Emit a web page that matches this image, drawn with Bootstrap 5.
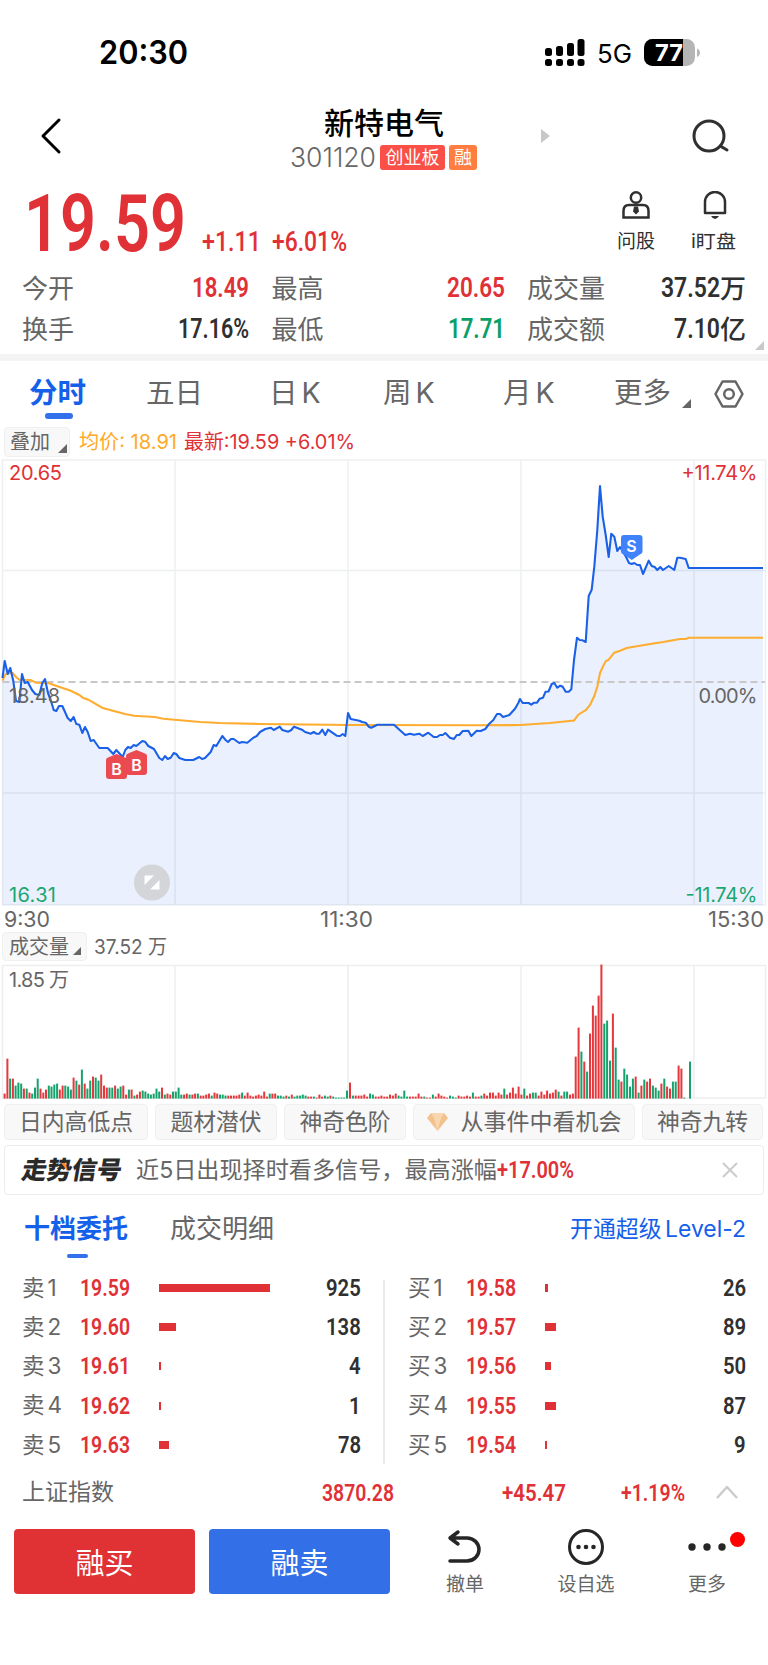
<!DOCTYPE html>
<html lang="zh-CN">
<head>
<meta charset="utf-8">
<meta name="viewport" content="width=device-width, initial-scale=1">
<title>新特电气 301120</title>
<link href="https://cdn.jsdelivr.net/npm/bootstrap@5.3.0/dist/css/bootstrap.min.css" rel="stylesheet">
<style>
:root{--up:#e03136;--down:#0b9f68;--brand:#1560ea;--ink:#303030;--dim:#666}
body{font-family:Inter,"Noto Sans CJK SC",sans-serif;color:var(--dim);line-height:1;background:#fff;width:768px;height:1665px;overflow:hidden}
svg{display:block;flex:none}
.din{font-family:Roboto,"Noto Sans CJK SC",sans-serif;font-weight:600}
[data-w]{display:inline-block;white-space:nowrap;transform-origin:0 50%;flex:none;text-align:left}
.up{color:var(--up)}.down{color:var(--down)}.ink{color:var(--ink)}.brand{color:var(--brand)}
.statusbar{height:104px;padding:1px 68px 0 99px;color:#000}
.clock{font-size:32px;font-weight:600}
.topbar{display:grid;grid-template-columns:290px 188px 290px;height:69px}
.topbar h1{font-size:30px;font-weight:500;line-height:38px;color:#000;margin:0}
.code-row{height:33px;gap:4px}
.chip{height:25px;border-radius:3px;color:#fff;font-size:18px;padding:0 5.5px;white-space:nowrap;flex:none}
.quote{height:94px;padding-left:24px}
.price{font-size:79px;font-weight:600}
.tool{font-size:18.5px;color:var(--ink);padding-top:18px;gap:13px}
.stats{height:87px;padding:1px 0 0 22px;display:grid;grid-template-columns:227px 233px 219px;grid-auto-rows:41px;column-gap:22.500px;font-size:26px}
.stats .din{font-size:27px}
.band{height:7px;background:#f4f4f4}
.periods{display:grid;height:64px;grid-template-columns:117px 123px 114px 120px 111px 100px auto;padding:1px 0 0 29px;font-size:28.500px;align-items:center}
.periods .on::after,.book-tabs .on::after{content:"";position:absolute;border-radius:3px;background:#3370eb}
.periods .on::after{width:28px;height:6px;left:16px;top:34px}
.pill{background:#f8f8f8;border:1px solid #f0f0f0;border-radius:4px}
.corner{width:0;height:0;border-left:9px solid transparent;border-bottom:9px solid var(--dim)}
.tags{height:45px;padding:4px 4px 5px;gap:7px;font-size:22.8px}
.signal{height:50px;margin:0 4px;border:1px solid #ececec;border-radius:4px;padding:0 25px 0 17px;font-size:23px}
.signal-logo{font-weight:900;font-size:25px;color:#2a2a2a;transform:skewX(-10deg)}
.book-tabs{height:68px;padding:0 22px 0 24px;font-size:26px}
.book-tabs .on::after{width:21px;height:4px;left:43px;top:38px}
.book{display:grid;grid-template-columns:384px 384px;height:202px;padding-top:5.500px}
.book>div{padding:0 23px 0 22px}
.book>div+div{padding:0 22px 0 24px}
.book-row{height:39.2px;font-size:22.5px}
.book-row .lab{width:58px}
.book-row .din{font-size:24px}
.book-row .px{width:79px}
.book-row .vol{height:8px;background:var(--up)}
.index{height:54px;padding:1px 30px 0 22px;font-size:23px}
.trade{height:65px;border-radius:4px;border:0;font-size:29px;color:#fff;padding-top:4px}
.act{font-size:19px;gap:12px}
</style>
<script src="https://cdn.jsdelivr.net/npm/bootstrap@5.3.0/dist/js/bootstrap.bundle.min.js"></script>
</head>
<body>
<div class="statusbar d-flex align-items-center">
  <span class="clock" data-w="89">20:30</span>
  <svg class="ms-auto" width="40" height="28" viewBox="0 0 40 28"><g><rect x="0" y="9" width="7" height="8" rx="2.5"/><rect x="11" y="7" width="7" height="10" rx="2.5"/><rect x="22" y="4" width="7" height="13" rx="2.5"/><rect x="32.500" y="0" width="7" height="17" rx="2.500"/><rect x="0" y="20" width="7" height="7" rx="2.500"/><rect x="11" y="20" width="7" height="7" rx="2.500"/><rect x="22" y="20" width="7" height="7" rx="2.500"/><rect x="32.500" y="20" width="7" height="7" rx="2.500"/></g></svg>
  <span style="font-size:26px;margin:3px 12px 0 12px" data-w="35">5G</span>
  <svg width="56" height="28" viewBox="0 0 56 28"><defs><clipPath id="cell"><rect width="51" height="27" rx="8.500"/></clipPath></defs><g clip-path="url(#cell)"><rect width="51" height="27" fill="#b5b5b5"/><rect width="39" height="27"/></g><path d="M53 9.500c4 1.500 4 7 0 8.500z" fill="#b5b5b5"/><text x="11" y="22" font-size="23.500" font-weight="700" fill="#fff" textLength="28" lengthAdjust="spacingAndGlyphs">77</text></svg>
</div>

<header class="topbar">
  <div class="d-flex align-items-center" style="padding:0 0 7px 40px"><svg width="22" height="38" viewBox="0 0 22 38" fill="none" stroke="#000" stroke-width="3" stroke-linecap="round" stroke-linejoin="round"><path d="M19 3 3 19l16 16"/></svg></div>
  <div>
    <h1 class="text-center">新特电气</h1>
    <div class="code-row d-flex align-items-center" style="margin-top:-1px"><span style="font-size:27px;font-weight:300" data-w="86">301120</span><span class="chip d-flex align-items-center" style="background:#fa5047">创业板</span><span class="chip d-flex align-items-center" style="background:#ff7d41;padding:0 5px">融</span></div>
  </div>
  <div class="d-flex align-items-center" style="padding:0 38px 7px 63px"><svg width="9" height="14"><path d="M0 0 9 7 0 14z" fill="#c8c8c8"/></svg><svg class="ms-auto" width="38" height="34" viewBox="0 0 38 34" fill="none" stroke="#303030" stroke-width="3" stroke-linecap="round"><circle cx="17" cy="17" r="15"/><path d="m30 28 5 3"/></svg></div>
</header>

<section class="quote d-flex">
  <div class="d-flex align-items-baseline up" style="padding-top:12px"><span class="din price" data-w="162">19.59</span><span class="din" style="font-size:27px;font-weight:500;margin-left:16px" data-w="59">+1.11</span><span class="din" style="font-size:27px;font-weight:500;margin-left:11px" data-w="75">+6.01%</span></div>
  <div class="ms-auto d-flex" style="padding-right:32px;gap:36px">
    <div class="tool d-flex flex-column align-items-center"><svg width="28" height="28" viewBox="0 0 28 28" fill="none" stroke="#303030" stroke-width="2.500"><circle cx="14" cy="6.500" r="5.200"/><path d="M7 14h14q5.500 0 5.500 6v6.500H1.500V20Q1.500 14 7 14z"/><path d="m12 15.500-1 5 3 3 3-3-1-5z" fill="#303030" stroke="none"/></svg><span style="font-size:19px">问股</span></div>
    <div class="tool d-flex flex-column align-items-center"><svg width="28" height="28" viewBox="0 0 28 28" fill="none" stroke="#303030" stroke-width="2.500" stroke-linejoin="round" style="margin-left:3px"><path d="M4 22V11a10 10 0 0 1 20 0v11z"/><path d="M10 25h8q-4 6-8 0z" fill="#303030" stroke="none"/></svg><span data-w="45">i盯盘</span></div>
  </div>
</section>

<section class="stats position-relative align-items-center">
  <div class="d-flex justify-content-between align-items-center"><span>今开</span><span class="din up" data-w="57">18.49</span></div>
  <div class="d-flex justify-content-between align-items-center"><span>最高</span><span class="din up" data-w="58">20.65</span></div>
  <div class="d-flex justify-content-between align-items-center"><span>成交量</span><span class="ink d-flex align-items-center"><span class="din" data-w="59">37.52</span><b class="fw-medium">万</b></span></div>
  <div class="d-flex justify-content-between align-items-center"><span>换手</span><span class="din ink" data-w="71">17.16%</span></div>
  <div class="d-flex justify-content-between align-items-center"><span>最低</span><span class="din down" data-w="57">17.71</span></div>
  <div class="d-flex justify-content-between align-items-center"><span>成交额</span><span class="ink d-flex align-items-center"><span class="din" data-w="46">7.10</span><b class="fw-medium">亿</b></span></div>
  <i class="corner position-absolute" style="right:4px;bottom:4px;border-bottom-color:#c8c8c8"></i>
</section>
<div class="band"></div>

<nav class="periods">
  <span class="on brand fw-bold position-relative">分时</span><span>五日</span><span>日<span class="ms-1">K</span></span><span>周<span class="ms-1">K</span></span><span>月<span class="ms-1">K</span></span>
  <span class="d-flex align-items-center">更多<i class="corner" style="margin:20px 0 0 11px"></i></span>
  <svg width="30" height="28" viewBox="0 0 30 28" fill="none" stroke="#666" stroke-width="2.500" stroke-linejoin="round"><path d="M1.500 14 8.500 1.500h13L28.500 14l-7 12.500h-13z"/><circle cx="15" cy="14" r="4.800"/></svg>
</nav>

<div class="d-flex align-items-center" style="height:33px;padding-left:4px;font-size:20px">
  <span class="pill d-flex align-items-center" style="width:66px;height:30px;padding-left:5px">叠加<i class="corner" style="margin:13px 0 0 8px"></i></span>
  <span style="color:#ffa928;margin-left:9px" data-w="98">均价: 18.91</span><span class="up" style="margin-left:7px" data-w="171">最新:19.59 +6.01%</span>
</div>

<svg id="chart" width="768" height="448" viewBox="0 458 768 448" font-size="20">
  <path id="area" fill="#eaf0fd"/>
  <path d="M2.500 460H765.500V905H2.500zM2.500 570.500H765M2.500 793H765M175 460V905M348 460V905M521 460V905M694 460V905" fill="none" stroke="#1e3250" stroke-opacity=".08" stroke-width="1.500"/>
  <path d="M2.500 682H765" stroke="#c8c8c8" stroke-width="1.800" stroke-dasharray="7 4"/>
  <path id="avg" fill="none" stroke="#ffad30" stroke-width="2.100"/>
  <path id="now" fill="none" stroke="#1b61e8" stroke-width="2.100" stroke-linejoin="round"/>
  <g fill="#666"><text x="9" y="703" textLength="51">18.48</text><text x="757.500" y="703" text-anchor="end" textLength="59">0.00%</text></g>
  <g fill="#e03136"><text x="9" y="479.500" textLength="53">20.65</text><text x="757.500" y="479.500" text-anchor="end" textLength="76">+11.74%</text></g>
  <g fill="#1ca671"><text x="9" y="902" textLength="47">16.31</text><text x="757.500" y="902" text-anchor="end" textLength="72">-11.74%</text></g>
  <g font-size="16" font-weight="600" text-anchor="middle" fill="#fff">
    <path d="M106 760q0-2 2-2.500l8.500-3.500 8.500 3.500q2 .5 2 2.500v16q0 3-3 3h-15q-3 0-3-3z" fill="#eb4a50"/><text x="116.500" y="774.500">B</text>
    <path d="M126 756q0-2 2-2.500l8.500-3.500 8.500 3.500q2 .5 2 2.500v16q0 3-3 3h-15q-3 0-3-3z" fill="#eb4a50"/><text x="136.500" y="770.500">B</text>
    <path d="M621 538q0-3 3-3h15.500q3 0 3 3v13.500q0 2-2 2.500l-8.700 6-8.800-6q-2-.5-2-2.500z" fill="#3f82fc"/><text x="631.500" y="551.500">S</text>
  </g>
  <circle cx="152" cy="882.500" r="18" fill="#d3d5d9"/><path d="M144.500 875.500h9.500l-9.500 9.500zM159.500 889.500h-9.500l9.500-9.500z" fill="#fff"/>
</svg>

<div class="d-flex align-items-center" style="height:26px;padding:0 4px;font-size:21px"><span data-w="46">9:30</span><span style="margin-left:270px" data-w="53">11:30</span><span class="ms-auto" data-w="56">15:30</span></div>
<div class="d-flex align-items-center" style="height:29px;padding-left:2px;font-size:20px">
  <span class="pill d-flex align-items-center" style="width:85px;height:29px;padding-left:6px">成交量<i class="corner" style="margin:9px 0 0 4px;border-width:0 0 8px 8px"></i></span><span style="margin-left:7px" data-w="73">37.52 万</span>
</div>
<svg id="volume" width="768" height="139" viewBox="0 961 768 139" font-size="20">
  <path d="M2.500 965.500H765.500V1098H2.500zM175 965V1098M348 965V1098M521 965V1098M694 965V1098" fill="none" stroke="#eee" stroke-width="1.500"/>
  <text x="9" y="987" fill="#666" textLength="60">1.85 万</text>
  <g id="bars"></g>
</svg>

<div class="tags d-flex">
  <span class="pill d-flex align-items-center justify-content-center" style="width:144px">日内高低点</span>
  <span class="pill d-flex align-items-center justify-content-center" style="width:122px">题材潜伏</span>
  <span class="pill d-flex align-items-center justify-content-center" style="width:122px">神奇色阶</span>
  <span class="pill d-flex align-items-center justify-content-center" style="width:222px;gap:13px;font-size:23px"><svg width="21" height="18" viewBox="0 0 21 18"><path d="M4 0h13l4 5-10.500 13L0 5z" fill="#f3c18c"/><path d="M4 0h13l-3 5H7zM7 5h7l-3.500 13z" fill="#f8d7ae"/></svg>从事件中看机会</span>
  <span class="pill d-flex align-items-center justify-content-center" style="width:121px">神奇九转</span>
</div>

<div class="signal d-flex align-items-center">
  <span class="signal-logo position-relative">走势信号<svg class="position-absolute" style="left:38px;top:5px" width="9" height="10"><path d="M0 0h4l5 10z" fill="#ff8b2d"/></svg></span>
  <span style="margin-left:14px" data-w="361">近5日出现择时看多信号，最高涨幅</span><span class="din up" style="font-size:24px" data-w="77">+17.00%</span>
  <svg class="ms-auto" width="16" height="16" stroke="#ccc" stroke-width="2"><path d="m1 1 14 14M15 1 1 15"/></svg>
</div>

<div class="book-tabs d-flex align-items-center">
  <span class="on brand fw-bold position-relative">十档委托</span><span style="margin-left:42px">成交明细</span>
  <span class="ms-auto brand" style="font-size:22.800px;word-spacing:-3px" data-w="176">开通超级 Level-2</span>
</div>

<section class="book position-relative">
  <div id="asks"></div><div id="bids"></div>
  <i class="position-absolute" style="left:383px;top:17px;width:2px;height:184px;background:#eaeaea"></i>
</section>

<div class="index d-flex align-items-center">
  <span>上证指数</span><span class="din up" style="font-size:24px;margin-left:208px" data-w="72">3870.28</span><span class="din up" style="font-size:24px;margin-left:108px" data-w="64">+45.47</span><span class="din up" style="font-size:24px;margin-left:55px" data-w="64">+1.19%</span>
  <svg class="ms-auto" width="22" height="14" fill="none" stroke="#ccc" stroke-width="2.500"><path d="m1 12 10-11 10 11"/></svg>
</div>

<footer class="d-flex align-items-start" style="padding:10px 0 0 14px">
  <button class="trade" style="width:181px;background:#e03135">融买</button><button class="trade" style="width:181px;margin-left:14px;background:#3370e8">融卖</button>
  <div class="act d-flex flex-column align-items-center" style="width:74px;margin-left:38px"><svg width="36" height="34" viewBox="0 0 36 34" fill="none" stroke="#262626" stroke-width="3.500" stroke-linecap="round" stroke-linejoin="round"><path d="M11 3 3 9l8 6M4 9h16a12 11.500 0 0 1 0 23H3"/></svg><span>撤单</span></div>
  <div class="act d-flex flex-column align-items-center" style="width:74px;margin-left:47px"><svg width="36" height="36" style="margin-bottom:-2px"><circle cx="18" cy="18" r="16.500" fill="none" stroke="#262626" stroke-width="3"/><g fill="#262626"><circle cx="10.500" cy="18" r="2.300"/><circle cx="18" cy="18" r="2.300"/><circle cx="25.500" cy="18" r="2.300"/></g></svg><span>设自选</span></div>
  <div class="act d-flex flex-column align-items-center position-relative" style="width:74px;margin-left:47px"><svg width="38" height="34" fill="#262626"><circle cx="4" cy="18" r="3.700"/><circle cx="19" cy="18" r="3.700"/><circle cx="34" cy="18" r="3.700"/></svg><span>更多</span><i class="position-absolute rounded-circle" style="width:15px;height:15px;background:#f00;left:60px;top:3px"></i></div>
</footer>

<script>
// Intraday price and average price, as chart points.
const now = "2.5,678 4.7,661 7.7,674 10.3,668 13.3,681 16,701 19.3,702 22,674 24.7,683 27.7,682 32,690 35.3,694 39.3,695 42.3,683 45,679 48,693 50.7,700 53.7,710 56.3,711 59,706 62.3,706 67.7,718 70.7,721 73.7,717 76.3,724 79.3,724.7 82.3,733 85,727 87.7,732 90.7,741 93.7,740 99.3,748 107.7,748 113.3,754 116.3,750 122.7,757 125.3,750 128,747 130.7,748 133.7,745 136.3,746 142.3,741 145,741.7 148.3,746 154,749 159.3,758 162.3,760 165,756 167.7,759 170.7,757.7 173.7,753 176.3,754 179.3,758 185.3,760 193.3,760 199.3,757 202,759 205,758 210.7,752 213.7,745 216.3,746 222.3,736 225.3,739.7 228,742 231,739 233.7,739 239.3,743 242,742 247.3,742.7 253.3,737.7 256.7,736 260,732 265.3,729 271,727.7 273.7,730 279.7,726.7 282.3,730 288.3,731.7 291.3,730 294,726.7 302,729.7 305,732 311,733.7 313.7,732 316.3,733.7 319.3,733.7 322.3,729.7 325.3,735 328,729.7 336.7,735.7 340,736 342.7,734 345.3,736 348,713 350.7,719 359.3,720.7 362.3,722 365.7,722.7 368.7,726.7 371.3,727.7 377.3,724.7 394,724.7 400,730.3 405.3,735 410,733.7 414,734.7 419.3,733.7 422.7,736 428.3,732.7 433.7,737 437,737 440,735 442.7,735 445.3,733 450,737.7 454,739 456.7,735 459.3,735 462.7,731 468.3,730.7 471.3,736 476.7,730.7 480.7,731 485.3,729 489.3,723.7 493.3,720 497,714 500,714 503,717 509.3,715 515,708.7 518.3,703 520,699 522.7,703 528.7,703 531.3,704.7 534,702.7 537,702.7 539.7,698.7 543,697.7 545.5,691.8 548.5,691.5 551.7,684 554.3,683 557.3,687.7 560.3,685.7 562.7,686.7 565.7,691.7 568.7,691.7 571.3,689.3 574,660 577,637.7 579.7,640 582.7,640.3 585.7,642 588.7,596 591.7,589.7 594.3,566.7 597.3,530 600,486 602.7,516.7 605.7,535 608.7,557 611.3,533.7 614.3,536.7 617.3,551 620,547 626,556.7 629,563 631.7,564 634.3,563 637.3,565 640,565 643,574 648.7,560.7 651.7,566 654.7,567 657.3,570 660.3,567 663,570 668.7,566 674.3,570 677.3,557.7 680,557.7 685.7,559 688.7,568 763,568";
const avg = "2.5,680.7 5,675 7.7,673 12.7,673 16,677 19.3,679.7 30.7,680 36,682.7 48.3,683 56.7,686 70.7,690.7 79.3,695 83.3,698 88.3,699.7 102.7,708 125,714 134,715.7 155,717 163.3,718.7 200,722 220,723 260,724 350,725 480,725.3 520,725 550,723 574,720.5 578.3,714.7 586,710 590,705 594.3,696 597.3,686.7 600,673 603.3,665.7 606,661 608.7,659.7 614.3,652.7 620,650.7 626.7,648 634,646.7 651.7,643.7 663.3,642 674.3,640 680,639 685.7,639 688.7,637.7 763,637.7";
document.getElementById("now").setAttribute("d", "M" + now);
document.getElementById("avg").setAttribute("d", "M" + avg);
document.getElementById("area").setAttribute("d", "M" + now + " 763,905 2.5,905z");

// Minute volume per session: r rises, g falls.
const am = "r5 r40 g20 r20 g13 g16 g15 r10 g10 r6 g5 g11 g20 r10 r6 r9 g13 g12 g14 g15 r9 r13 g13 g12 g9 r21 g18 r14 g29 r15 g10 g18 r22 g21 g18 r24 r13 r11 g11 g11 r13 g10 g12 r13 r4 g9 r9 g3 r4 r7 g8 g7 g5 g4 g5 g10 g7 r11 g4 r5 r4 g7 g7 g11 g4 r4 r5 g4 r4 r5 g5 r3 r3 r4 r5 g3 r6 r5 g4 g4 g3 r3 r3 r3 r3 r4 g6 r3 r6 r3 r2 r3 r4 r3 r7 r2 g5 r5 r5 g3 g3 g2 r3 g2 r4 g2 g3 g3 g4 g3 r2 r2 g2 r1 r4 r2 g3 g2 r3 g2 g1 g1 g1 g1 g8";
const pm = "r16 g3 r3 r3 r3 r4 r2 g5 g4 r2 r2 r3 r2 r2 r4 r3 r5 g3 g2 g8 g2 r2 r2 r2 r5 r2 g2 r1 r1 g4 r2 r5 r3 r2 r1 g3 g2 g1 r3 r2 r2 r3 r2 g6 r2 r2 g3 r5 r3 r6 r6 r3 r6 r4 g10 r4 r6 r11 r5 r12 r4 g10 r3 r5 g6 g6 r3 r7 r4 r8 r5 r6 r9 g7 r3 g7 g7 r4 r5 r42 r71 g47 r37 g27 r65 r93 r83 r103 r134 g75 g78 g38 r85 g51 g19 r17 g30 g24 g12 g20 r22 g6 r13 g19 r17 r20 g13 g11 g8 r15 g20 r12 r10 g17 g17 r33 r30 g1 g0 g37";
const bars = (s, a, b) => s.split(" ").map((v, i, all) => {
  const h = +v.slice(1), x = a + i * (b - a) / (all.length - 1);
  return `<rect x="${(x - 1).toFixed(1)}" y="${1098.6 - h}" width="2" height="${h}" fill="${v[0] === "r" ? "#e4383c" : "#16a26d"}"/>`;
}).join("");
document.getElementById("bars").innerHTML = bars(am, 4.6, 347) + bars(pm, 350, 690);

// Order book: price, lots, bar length.
const asks = [["19.59", 925, 110.5], ["19.60", 138, 16.5], ["19.61", 4, 1.5], ["19.62", 1, 1.5], ["19.63", 78, 9.5]];
const bids = [["19.58", 26, 3], ["19.57", 89, 10.5], ["19.56", 50, 6], ["19.55", 87, 10.5], ["19.54", 9, 1.5]];
const rows = (side, list) => list.map(([p, n, w], i) => `<div class="book-row d-flex align-items-center"><span class="lab">${side}<span style="margin-left:3px">${i + 1}</span></span><span class="px"><span class="din up" data-w="50">${p}</span></span><i class="vol" style="width:${w}px"></i><span class="din ink ms-auto" data-w="${String(n).length * 11.6}">${n}</span></div>`).join("");
document.getElementById("asks").innerHTML = rows("卖", asks);
document.getElementById("bids").innerHTML = rows("买", bids);

document.querySelectorAll("[data-w]").forEach(el => {
  const w = +el.dataset.w, natural = el.getBoundingClientRect().width;
  el.style.width = w + "px";
  el.style.transform = `scaleX(${w / natural})`;
});
</script>
</body>
</html>
